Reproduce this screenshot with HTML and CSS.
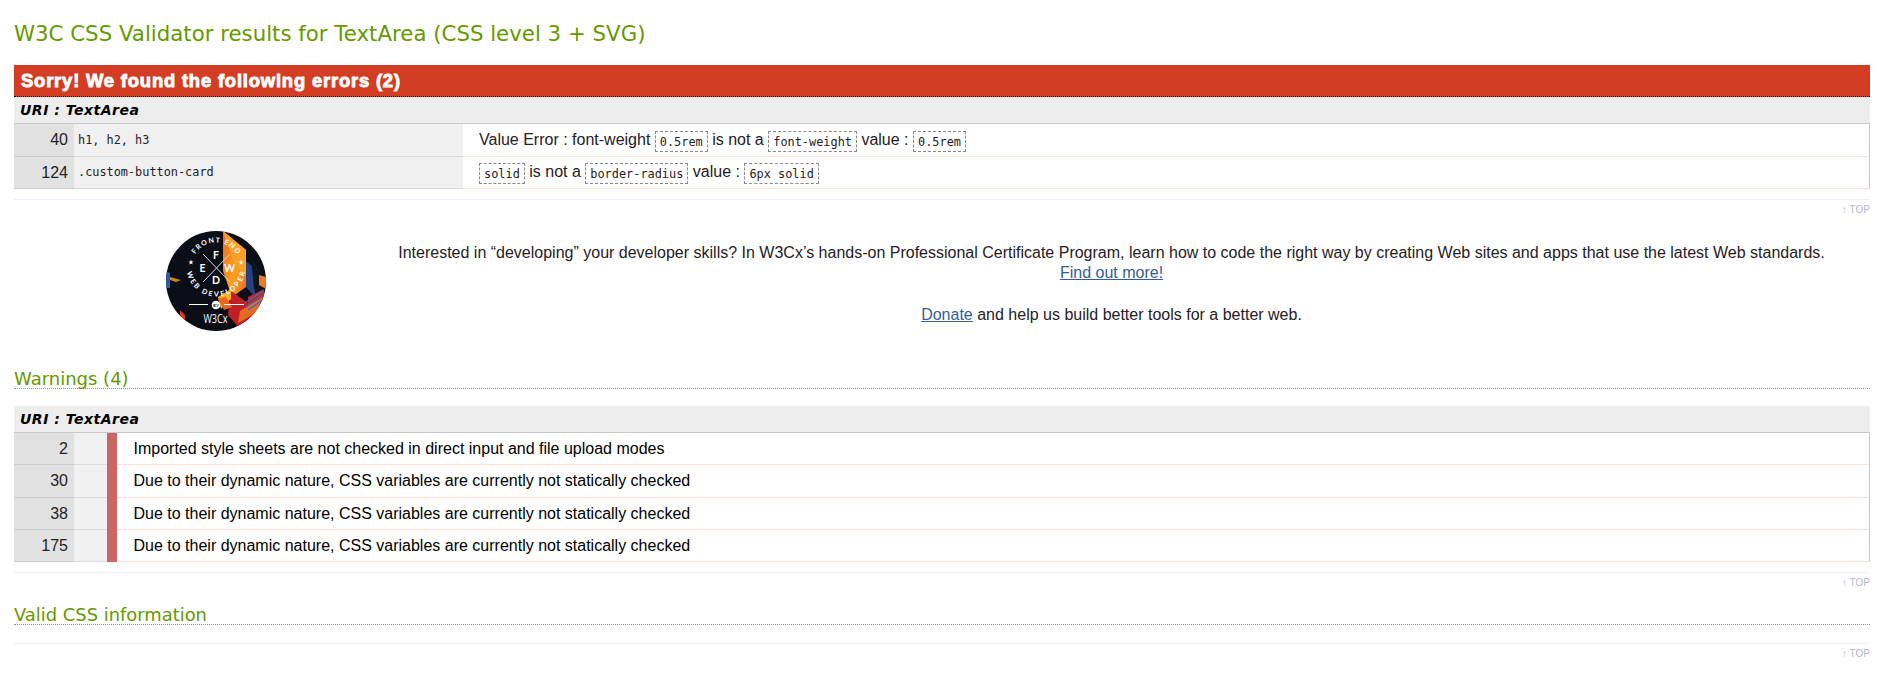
FILE: index.html
```html
<!DOCTYPE html>
<html lang="en">
<head>
<meta charset="utf-8">
<title>W3C CSS Validator results for TextArea (CSS level 3 + SVG)</title>
<link rel="stylesheet" href="styles.css">
</head>
<body>
<h2 class="title">W3C CSS Validator results for TextArea (CSS level 3 + SVG)</h2>
<section class="errors">
<h3 class="banner">Sorry! We found the following errors (2)</h3>
<h4 class="uri">URI : TextArea</h4>
<div class="row tall"><div class="line">40</div><div class="context">h1, h2, h3</div><div class="message">Value Error : font-weight <code>0.5rem</code> is not a <code>font-weight</code> value : <code>0.5rem</code></div></div>
<div class="row raised"><div class="line">124</div><div class="context">.custom-button-card</div><div class="message"><code>solid</code> is not a <code>border-radius</code> value : <code>6px solid</code></div></div>
</section>
<p class="top"><a>↑ TOP</a></p>
<section class="promo">
<svg class="badge" viewBox="0 0 100 100" role="img" aria-label="Front End Web Developer by W3Cx">
<defs>
<clipPath id="disc"><circle cx="50" cy="50" r="50"/></clipPath>
<linearGradient id="flame" x1="0" y1="0" x2="1" y2="1"><stop offset="0" stop-color="#f26a21"/><stop offset=".6" stop-color="#fba21d"/><stop offset="1" stop-color="#e8622a"/></linearGradient>
<path id="arcTop" d="M25.500 36A24.500 24.500 0 0 1 74.500 36"/>
<path id="arcLow" d="M20.500 36A29.500 29.500 0 0 0 79.500 36"/>
</defs>
<g clip-path="url(#disc)">
<rect width="100" height="100" fill="#0b0e17"/>
<path d="M57 0L80 19V56L66 66L57 40Z" fill="url(#flame)"/>
<path d="M57 0L68 32L80 44V19Z" fill="#fba028"/>
<path d="M80 30L89 38V66L80 56Z" fill="#27437f"/>
<path d="M85 28L96 40V66L88 58Z" fill="#10131f"/>
<path d="M93 44L100 46V58L93 54Z" fill="#ee7a28"/>
<path d="M65 60L82 72L90 88L74 98L62 84Z" fill="#c01f26"/>
<path d="M52 66L65 58V68L55 78Z" fill="#fbb024"/>
<path d="M52 68L60 66L66 76L58 79Z" fill="#ed6322"/>
<path d="M82 66L98 58V68L82 76Z" fill="#c9262a"/>
<path d="M74 80L97 66L90 82L72 92Z" fill="#e96a24"/>
<path d="M79 72L97 60M80 76L96 65M82 79L95 70" stroke="#3470b8" stroke-width="1.400"/>
<path d="M0 40L4 42V57L0 57Z" fill="#2e5aa0"/><path d="M4 46L15 49L10 51L4 49Z" fill="#c98722"/>
<path d="M14 79L19 84V93L14 88Z" fill="#d8372a"/>
<path d="M37 23L64 51M64 23L37 51" stroke="#d7d8db"/>
<path d="M23 73.500H42M58 73.500H78" stroke="#fff"/>
<circle cx="50" cy="74" r="4.300" fill="#fff"/>
<g class="badge-text">
<text font-size="10.500" x="50" y="28">F</text>
<text font-size="10.500" x="36.500" y="41">E</text>
<text font-size="10.500" x="63.500" y="40.500">W</text>
<text font-size="10.500" x="50" y="52.500">D</text>
<text font-size="7"><textPath href="#arcTop" startOffset="50%" textLength="50">FRONT END</textPath></text>
<text font-size="7"><textPath href="#arcLow" startOffset="50%" textLength="82">WEB DEVELOPER</textPath></text>
<path d="M25 28.500l.7 1.900h2l-1.600 1.200.6 2-1.700-1.200-1.700 1.200.6-2-1.600-1.200h2zM75 28.500l.7 1.900h2l-1.600 1.200.6 2-1.700-1.200-1.700 1.200.6-2-1.600-1.200h2z"/>
<text font-size="4.500" x="50" y="75.600" fill="#15171f">BY</text>
<text class="brand" font-size="12" x="49.500" y="92" textLength="24" lengthAdjust="spacingAndGlyphs">W3Cx</text>
</g>
</g>
</svg>
<div class="promo-text"><p>Interested in “developing” your developer skills? In W3Cx’s hands-on Professional Certificate Program, learn how to code the right way by creating Web sites and apps that use the latest Web standards.<br><a class="link">Find out more!</a></p><p><a class="link">Donate</a> and help us build better tools for a better web.</p></div>
</section>
<section class="warnings">
<h3 class="heading">Warnings (4)</h3>
<h4 class="uri">URI : TextArea</h4>
<div class="row"><div class="line">2</div><div class="context"></div><div class="message">Imported style sheets are not checked in direct input and file upload modes</div></div>
<div class="row tall"><div class="line">30</div><div class="context"></div><div class="message">Due to their dynamic nature, CSS variables are currently not statically checked</div></div>
<div class="row"><div class="line">38</div><div class="context"></div><div class="message">Due to their dynamic nature, CSS variables are currently not statically checked</div></div>
<div class="row"><div class="line">175</div><div class="context"></div><div class="message">Due to their dynamic nature, CSS variables are currently not statically checked</div></div>
</section>
<p class="top"><a>↑ TOP</a></p>
<section class="valid"><h3 class="heading">Valid CSS information</h3></section>
<p class="top"><a>↑ TOP</a></p>
</body>
</html>
```
FILE: styles.css
```css
* { box-sizing: border-box; margin: 0; padding: 0; }
body { padding: 0 8px 0 14px; background: #fff; font: 16px "Liberation Sans", Arial, sans-serif; color: #1f2126; }
.title { height: 65px; padding-top: 21px; font: 21.3px/25px "DejaVu Sans", Verdana, sans-serif; color: #690; }
.banner { height: 32px; padding-left: 7px; font-size: 18.4px; line-height: 32px; letter-spacing: .82px; color: #fff; background: #d23d24; border-bottom: 1px dotted #000; -webkit-text-stroke: .9px #fff; }
.uri { height: 27px; padding-left: 6px; font: italic bold 14px/26px "DejaVu Sans", Verdana, sans-serif; letter-spacing: .5px; color: #000; background: #ededed; border-bottom: 1px solid #c8c8c8; }
.row { display: flex; height: 32px; line-height: 31px; }
.row.tall { height: 33px; line-height: 32px; }
.row.raised .message { line-height: 29px; }
.line { width: 60px; padding-right: 6px; text-align: right; background: #e1e1e1; border-bottom: 1px solid #ccc; }
.context { width: 389px; padding-left: 4px; font-family: "DejaVu Sans Mono", monospace; font-size: 11.87px; background: #f0f0f0; border-bottom: 1px solid #ddd; }
.message { flex: 1; padding-left: 16px; border-bottom: 1px solid #fdd; border-right: 1px solid #c8c8c8; }
.message code { padding: 2.5px 4px; border: 1px dashed #888; font: 11.9px "DejaVu Sans Mono", monospace; }
.top { margin-top: 10px; border-top: 1px solid #eef; padding-top: 4px; height: 20px; font-size: 10px; line-height: 12px; text-align: right; color: #b5b5cc; }
.promo { display: flex; height: 139px; padding: 12px 0 0 152px; }
.badge { width: 100px; height: 100px; flex: none; }
.badge-text { font-family: Lato, sans-serif; font-weight: 700; fill: #fff; text-anchor: middle; }
.brand { font-family: "Open Sans", sans-serif; font-weight: 400; }
.promo-text { flex: 1; margin-left: 87px; padding-top: 12px; text-align: center; line-height: 20.4px; }
.promo-text p + p { margin-top: 21.4px; }
.link { color: #365d95; text-decoration: underline; }
.heading { height: 31px; font: 18px/22px "DejaVu Sans", Verdana, sans-serif; padding-top: 10px; color: #690; border-bottom: 1px dotted #996; }
.warnings .heading { margin-bottom: 17px; }
.warnings .context { width: 43px; border-right: 10px solid #c66; border-bottom: 0; background: linear-gradient(#ddd, #ddd) bottom / 100% 1px no-repeat #f0f0f0; }
.warnings .message { padding-left: 16.5px; color: #000; }
.valid { height: 41px; padding-top: 2px; }
.valid .heading { font-size: 17.9px; }
```
